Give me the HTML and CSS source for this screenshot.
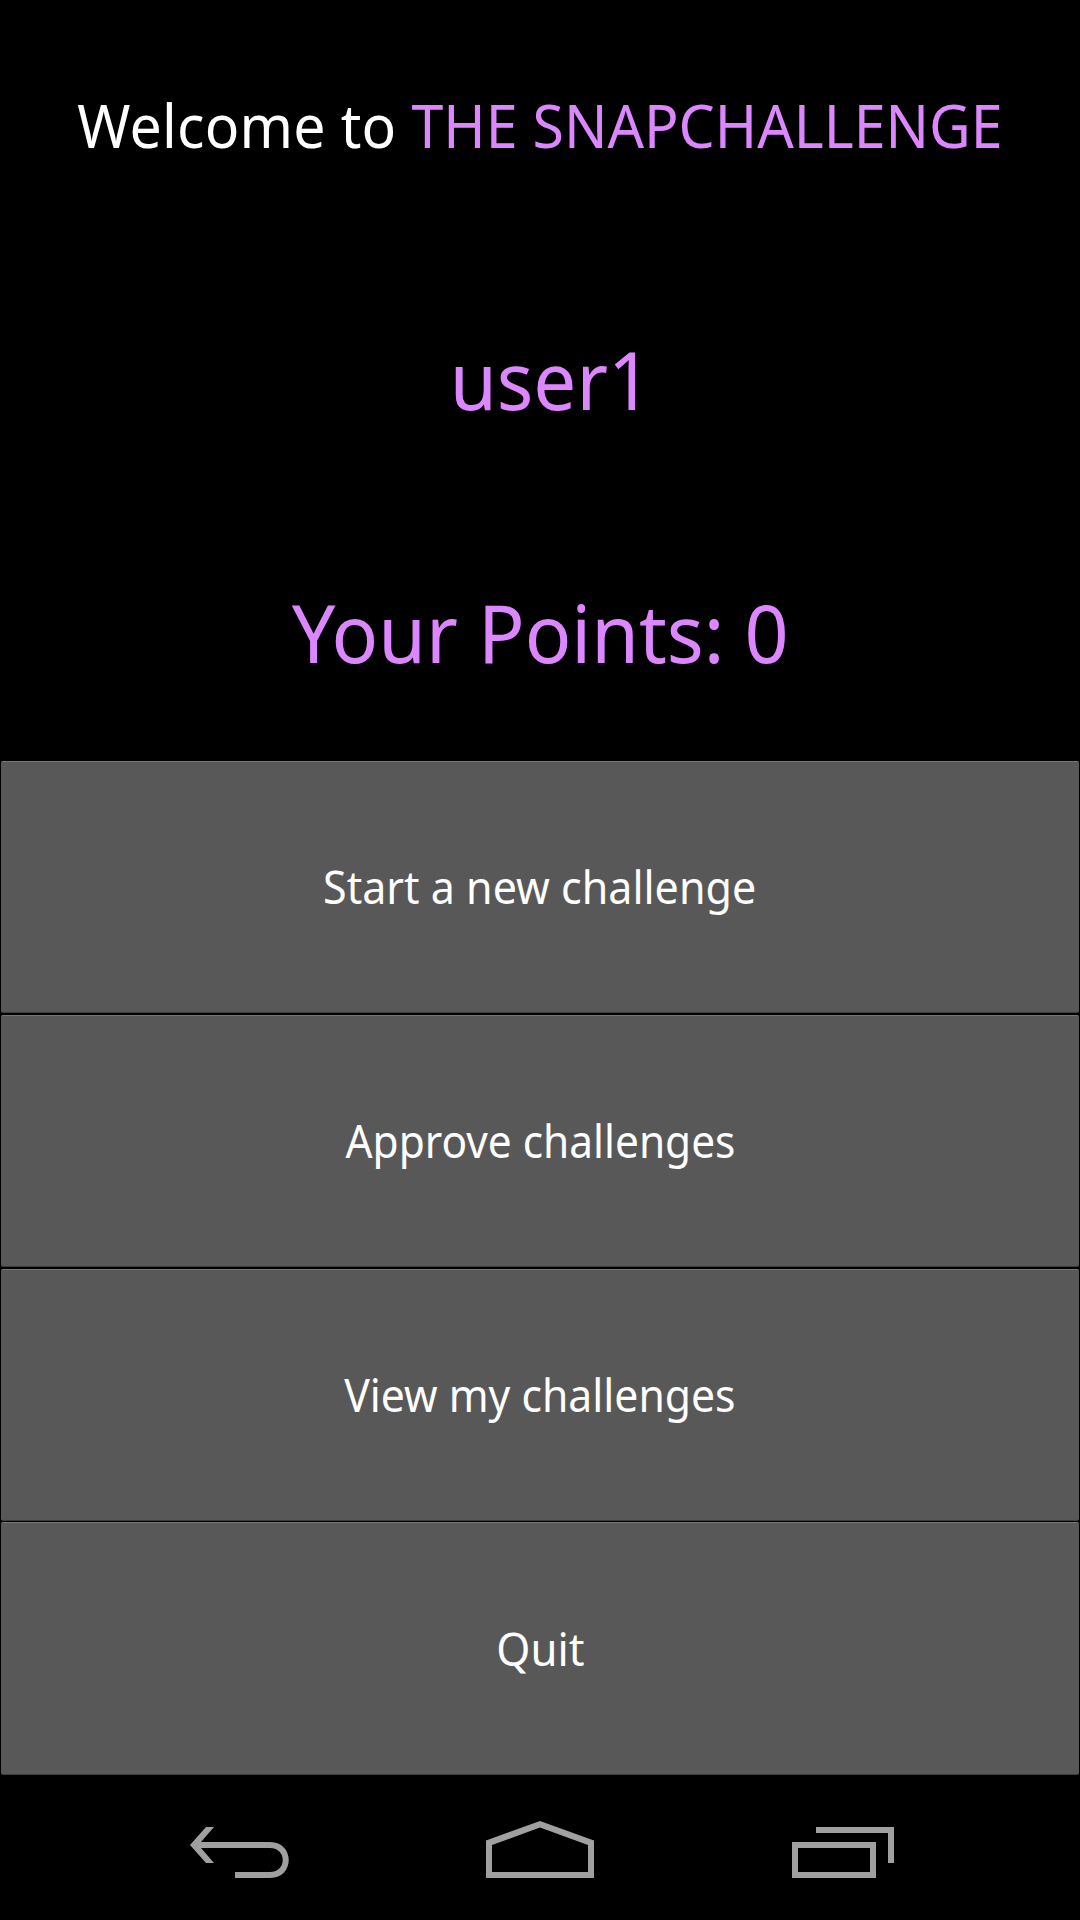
FILE: index.html
```html
<!DOCTYPE html>
<html lang="en">
<head>
<meta charset="utf-8">
<title>Snapchallenge</title>
<link rel="stylesheet" href="styles.css">
</head>
<body>
<main class="screen">
  <h1 class="row welcome"><span class="fit"><span class="greet">Welcome to </span>THE SNAPCHALLENGE</span></h1>
  <p class="row user"><span class="fit"> user1</span></p>
  <p class="row points"><span class="fit">Your Points: 0</span></p>
  <button class="row action start"><span class="fit">Start a new challenge</span></button>
  <button class="row action approve"><span class="fit">Approve challenges</span></button>
  <button class="row action view"><span class="fit">View my challenges</span></button>
  <button class="row action quit"><span class="fit">Quit</span></button>
</main>
<nav class="navbar">
  <svg class="nav-icons" viewBox="0 0 1080 144" fill="#a0a0a0" fill-rule="evenodd">
    <path d="M190 69L206 51H214L201 66H270C295 66 295 102 270 102H235V96H270C287 96 287 72 270 72H201L214 87H206Z"/>
    <path d="M486 64.5L540 45L594 64.5V102H486ZM492 69V96H588V69L540 51.5Z"/>
    <path d="M792 66H876V102H792ZM798 72V96H870V72ZM816 51H894V87H888V57H816Z"/>
  </svg>
</nav>
</body>
</html>
```
FILE: styles.css
```css
body {
  margin: 0;
  background: #000;
  font-family: "Noto Sans", "Open Sans", sans-serif;
}
.screen {
  height: 1776px;
  display: grid;
  grid-template-rows: 254px 254px 253px 254px 254px 253px 254px;
}
.row {
  margin: 0;
  padding: 0;
  display: flex;
  align-items: center;
  justify-content: center;
  font-family: inherit;
  font-weight: 400;
  white-space: pre;
  color: #dc87ff;
}
.fit { display: block; }
.welcome { font-size: 60px; }
.welcome .fit { transform: translateY(-2px) scaleX(.954); }
.greet { color: #fff; letter-spacing: .2px; }
.user, .points { font-size: 81px; }
.user .fit { transform: translate(1px, -3px) scaleX(.942); }
.points .fit { transform: translate(.5px, -3px) scaleX(.953); }
.action {
  margin: 0 1px 2px;
  border: 0;
  border-top: 1px solid #777;
  border-bottom: 1px solid #3c3c3c;
  border-radius: 2px;
  background: #585858;
  color: #fff;
  font-size: 46px;
}
.view, .quit { margin-bottom: 1px; }
.start .fit { transform: translateY(-1px) scaleX(.935); }
.approve .fit { transform: translateY(-1px) scaleX(.922); }
.view .fit { transform: translateY(-1px) scaleX(.928); }
.quit .fit { transform: translateY(-1px) scaleX(.95); }
.navbar { height: 144px; }
.nav-icons { display: block; width: 1080px; height: 144px; }
```
